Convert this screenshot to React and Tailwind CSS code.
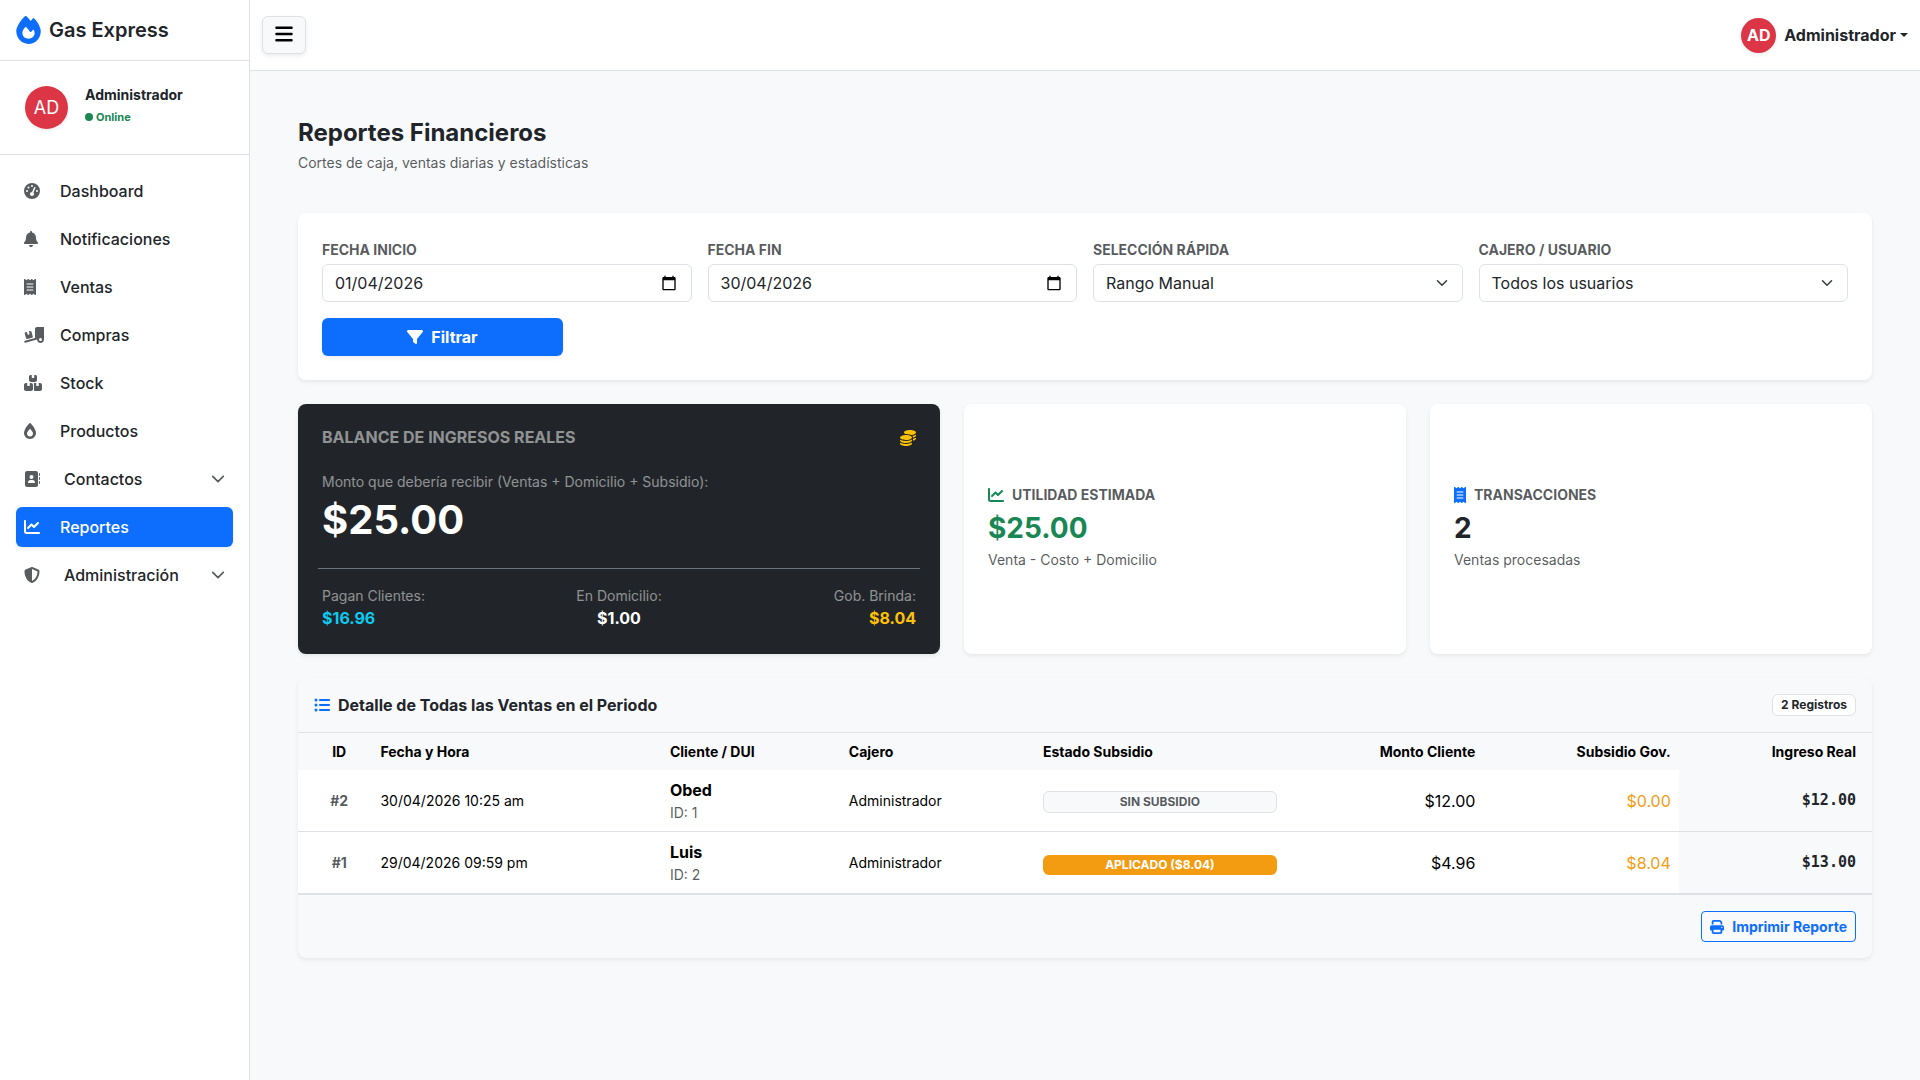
import React, { useState } from 'react'
import {
  FaAddressBook, FaBars, FaBell, FaBoxesStacked, FaChartLine, FaCoins, FaFilter, FaFire,
  FaFireFlameSimple, FaGaugeHigh, FaListUl, FaPrint, FaReceipt, FaShieldHalved, FaTruckRampBox
} from 'react-icons/fa6'

const navItems = [
  { label: 'Dashboard', icon: FaGaugeHigh, width: 'w-4' },
  { label: 'Notificaciones', icon: FaBell, width: 'w-[14px]' },
  { label: 'Ventas', icon: FaReceipt, width: 'w-3' },
  { label: 'Compras', icon: FaTruckRampBox, width: 'w-5' },
  { label: 'Stock', icon: FaBoxesStacked, width: 'w-[18px]' },
  { label: 'Productos', icon: FaFireFlameSimple, width: 'w-3' },
  { label: 'Contactos', icon: FaAddressBook, width: 'w-4', submenu: true },
  { label: 'Reportes', icon: FaChartLine, width: 'w-4', active: true },
  { label: 'Administración', icon: FaShieldHalved, width: 'w-4', submenu: true }
]

const ventas = [
  { id: 2, fecha: '30/04/2026 10:25 am', cliente: 'Obed', dui: 1, cajero: 'Administrador', aplicado: false, monto: '$12.00', subsidio: '$0.00', ingreso: '$12.00' },
  { id: 1, fecha: '29/04/2026 09:59 pm', cliente: 'Luis', dui: 2, cajero: 'Administrador', aplicado: true, monto: '$4.96', subsidio: '$8.04', ingreso: '$13.00' }
]

const Chevron = ({ className }) => (
  <svg viewBox="0 0 16 16" fill="none" stroke="currentColor" strokeWidth="2" strokeLinecap="round" strokeLinejoin="round" className={className} aria-hidden="true">
    <path d="m2 5 6 6 6-6" />
  </svg>
)

const CalendarIcon = ({ className }) => (
  <svg viewBox="0 0 24 24" fill="currentColor" className={className} aria-hidden="true">
    <path d="M20 3h-1V1h-2v2H7V1H5v2H4c-1.1 0-2 .9-2 2v16c0 1.1.9 2 2 2h16c1.1 0 2-.9 2-2V5c0-1.1-.9-2-2-2zm0 18H4V8h16v13z" />
  </svg>
)

const Sidebar = () => (
  <aside className="w-[250px] shrink-0 bg-white border-r border-[#dee2e6]">
    <a href="#" className="flex items-center gap-2 h-[61px] px-4 pb-px border-b border-[#dee2e6]">
      <FaFire className="h-7 w-[25px] text-[#0d6efd]" />
      <span className="text-xl font-semibold">Gas Express</span>
    </a>

    {/* Usuario */}
    <div className="flex items-center gap-[17px] p-[25px] border-b border-[#dee2e6]">
      <div className="w-[43px] h-[43px] rounded-full bg-[#dc3545] text-white text-lg leading-none flex items-center justify-center shadow-[0_2px_4px_rgba(0,0,0,0.075)]">
        AD
      </div>
      <div className="pb-1">
        <p className="text-sm font-bold leading-[18px] mb-[5px]">Administrador</p>
        <p className="flex items-center gap-[3px] text-[11px] font-bold leading-4 text-[#198754]">
          <span className="w-2 h-2 rounded-full bg-[#198754]" />
          Online
        </p>
      </div>
    </div>

    {/* Menú */}
    <nav className="flex flex-col gap-2 p-4">
      {navItems.map(({ label, icon: Icon, width, submenu, active }) => {
        const content = (
          <>
            <span className={`shrink-0 ${submenu ? 'w-10' : 'w-9'} ${active ? 'text-white' : 'text-[#212529bf]'}`}>
              <Icon className={`h-4 ${width}`} />
            </span>
            <span>{label}</span>
            {submenu && <Chevron className="w-[14px] h-[14px] ml-auto text-[#212529bf]" />}
          </>
        )
        if (submenu) {
          return (
            <button key={label} type="button" className="flex items-center h-10 px-2 rounded-md font-medium text-left cursor-pointer">
              {content}
            </button>
          )
        }
        return (
          <a key={label} href="#" className={`flex items-center h-10 px-2 rounded-md font-medium ${active ? 'bg-[#0d6efd] text-white shadow-[0_2px_4px_rgba(0,0,0,0.075)]' : ''}`}>
            {content}
          </a>
        )
      })}
    </nav>
  </aside>
)

const Topbar = () => (
  <header className="flex items-center justify-between h-[71px] px-3 bg-white border-b border-[#dee2e6]">
    <button type="button" aria-label="Menú" className="flex items-center justify-center w-11 h-[38px] pb-0.5 rounded-md bg-[#f8f9fa] border border-[#dee2e6] text-black shadow-[0_2px_4px_rgba(0,0,0,0.075)] cursor-pointer">
      <FaBars className="h-5 w-[18px]" />
    </button>
    <button type="button" className="flex items-center font-bold cursor-pointer">
      <span className="w-[35px] h-[35px] mr-2 rounded-full bg-[#dc3545] text-white flex items-center justify-center shadow-[0_2px_4px_rgba(0,0,0,0.075)]">
        AD
      </span>
      Administrador
      <span className="ml-1 border-x-4 border-t-4 border-x-transparent border-t-[#212529]" />
    </button>
  </header>
)

const labelClass = 'block pt-0.5 mb-1 text-sm font-bold leading-[21px] uppercase text-[#212529bf]'
const fieldClass = 'block w-full h-[38px] px-3 bg-white border border-[#dee2e6] rounded-md text-base'

const DateField = ({ id, label, value, onChange }) => (
  <div>
    <label htmlFor={id} className={labelClass}>{label}</label>
    <div className="relative">
      <input id={id} type="text" value={value} onChange={e => onChange(e.target.value)} className={fieldClass} />
      <CalendarIcon className="absolute right-[15px] top-[11px] w-4 h-4 text-black pointer-events-none" />
    </div>
  </div>
)

const SelectField = ({ id, label, options }) => (
  <div>
    <label htmlFor={id} className={labelClass}>{label}</label>
    <div className="relative">
      <select id={id} className={`${fieldClass} appearance-none`}>
        {options.map(option => <option key={option}>{option}</option>)}
      </select>
      <Chevron className="absolute right-[15px] top-[13px] w-3 h-3 pointer-events-none text-[#343a40]" />
    </div>
  </div>
)

const Filters = () => {
  const [inicio, setInicio] = useState('01/04/2026')
  const [fin, setFin] = useState('30/04/2026')

  return (
    <form onSubmit={e => e.preventDefault()} className="p-6 bg-white rounded-lg shadow-[0_2px_4px_rgba(0,0,0,0.075)]">
      <div className="grid grid-cols-4 gap-4">
        <DateField id="inicio" label="Fecha inicio" value={inicio} onChange={setInicio} />
        <DateField id="fin" label="Fecha fin" value={fin} onChange={setFin} />
        <SelectField id="rango" label="Selección rápida" options={['Rango Manual', 'Hoy', 'Esta semana', 'Este mes']} />
        <SelectField id="cajero" label="Cajero / usuario" options={['Todos los usuarios', 'Administrador']} />
      </div>
      <button type="submit" className="flex items-center justify-center gap-2 w-[241px] h-[38px] mt-4 rounded-md bg-[#0d6efd] text-white font-bold shadow-[0_2px_4px_rgba(0,0,0,0.075)] cursor-pointer">
        <FaFilter className="h-4 w-4" />
        Filtrar
      </button>
    </form>
  )
}

const BalanceCard = () => (
  <section className="p-6 rounded-lg bg-[#212529] text-white shadow-[0_2px_4px_rgba(0,0,0,0.075)]">
    <div className="flex items-center justify-between mb-6 leading-[19px]">
      <h2 className="font-bold text-white/50 uppercase">Balance de ingresos reales</h2>
      <FaCoins className="h-4 w-4 text-[#ffc107]" />
    </div>
    <p className="text-sm leading-[21px] text-white/50">Monto que debería recibir (Ventas + Domicilio + Subsidio):</p>
    <p className="text-[40px] font-bold leading-[48px] mt-1">$25.00</p>
    <div className="-mx-1 mt-6 px-1 pt-4 border-t border-[#6c757d] grid grid-cols-3">
      <div>
        <p className="text-sm leading-[21px] text-white/50">Pagan Clientes:</p>
        <p className="font-bold text-[#0dcaf0]">$16.96</p>
      </div>
      <div className="text-center">
        <p className="text-sm leading-[21px] text-white/50">En Domicilio:</p>
        <p className="font-bold">$1.00</p>
      </div>
      <div className="text-right">
        <p className="text-sm leading-[21px] text-white/50">Gob. Brinda:</p>
        <p className="font-bold text-[#ffc107]">$8.04</p>
      </div>
    </div>
  </section>
)

const StatCard = ({ icon, title, value, valueClass, note }) => (
  <section className="flex flex-col justify-center p-6 rounded-lg bg-white shadow-[0_2px_4px_rgba(0,0,0,0.075)]">
    <h2 className="flex items-center gap-2 text-sm font-bold leading-[21px] uppercase text-[#212529bf]">
      {icon}
      {title}
    </h2>
    <p className={`text-[28px] font-bold leading-[34px] mt-1.5 mb-1 ${valueClass}`}>{value}</p>
    <p className="pb-1 text-sm leading-[21px] text-[#212529bf]">{note}</p>
  </section>
)

const SalesTable = () => (
  <section className="rounded-lg bg-[#f8f9fa] shadow-[0_2px_4px_rgba(0,0,0,0.075)]">
    <div className="flex items-center justify-between h-[55px] px-4 border-b border-[#dee2e6]">
      <h2 className="flex items-center gap-2 font-bold">
        <FaListUl className="h-4 w-4 text-[#0d6efd]" />
        Detalle de Todas las Ventas en el Periodo
      </h2>
      <span className="px-2 py-1 rounded-md border border-[#dee2e6] bg-white text-xs font-bold leading-3">2 Registros</span>
    </div>

    <table className="w-full table-fixed text-black border-b-2 border-[#dee2e6] border-separate border-spacing-0">
      <colgroup>
        <col className="w-[4.73%]" />
        <col className="w-[18.39%]" />
        <col className="w-[11.37%]" />
        <col className="w-[12.33%]" />
        <col className="w-[15.88%]" />
        <col className="w-[12.61%]" />
        <col className="w-[12.42%]" />
        <col className="w-[12.27%]" />
      </colgroup>
      <thead>
        <tr className="text-sm leading-[21px] text-left *:p-2 *:font-bold">
          <th className="pl-4! text-center">ID</th>
          <th>Fecha y Hora</th>
          <th>Cliente / DUI</th>
          <th>Cajero</th>
          <th>Estado Subsidio</th>
          <th className="text-right">Monto Cliente</th>
          <th className="text-right">Subsidio Gov.</th>
          <th className="pr-4! text-right">Ingreso Real</th>
        </tr>
      </thead>
      <tbody>
        {ventas.map(v => (
          <tr key={v.id} className="bg-white *:p-2 *:border-[#dee2e6] not-last:*:border-b">
            <td className="pl-4! text-center text-sm font-bold text-[#212529bf]">#{v.id}</td>
            <td className="text-sm">{v.fecha}</td>
            <td>
              <div className="font-bold leading-6">{v.cliente}</div>
              <div className="text-sm leading-[21px] text-[#212529bf]">ID: {v.dui}</div>
            </td>
            <td className="text-sm">{v.cajero}</td>
            <td>
              {v.aplicado
                ? <span className="block mt-1 py-1 rounded-md bg-[#f39c12] text-white text-xs font-bold leading-3 text-center">APLICADO ({v.subsidio})</span>
                : <span className="block mt-0.5 py-1 rounded-md bg-[#f8f9fa] border border-[#dee2e6] text-[#212529bf] text-xs font-bold leading-3 text-center">SIN SUBSIDIO</span>}
            </td>
            <td className="text-right">{v.monto}</td>
            <td className="text-right text-[#f39c12]">{v.subsidio}</td>
            <td className="pr-4! text-right bg-[#f8f9fa] text-[#212529] font-bold text-[15px] font-['DejaVu_Sans_Mono',monospace]">{v.ingreso}</td>
          </tr>
        ))}
      </tbody>
    </table>

    <div className="flex justify-end p-4">
      <button type="button" className="flex items-center gap-2 h-[31px] px-2 rounded border border-[#0d6efd] text-[#0d6efd] text-sm font-bold cursor-pointer">
        <FaPrint className="h-[14px] w-[14px]" />
        Imprimir Reporte
      </button>
    </div>
  </section>
)

const App = () => (
  <div className="flex min-h-screen bg-[#f8f9fa] text-[#212529] text-base font-['Inter',sans-serif]">
    <Sidebar />
    <div className="flex-1 min-w-0">
      <Topbar />
      <main className="p-12">
        <h1 className="text-2xl font-bold leading-7 mb-[5px]">Reportes Financieros</h1>
        <p className="text-sm leading-[21px] mb-10 text-[#212529bf]">Cortes de caja, ventas diarias y estadísticas</p>

        <div className="flex flex-col gap-6">
          <Filters />
          <div className="grid grid-cols-[642fr_442fr_442fr] gap-6">
            <BalanceCard />
            <StatCard
              icon={<FaChartLine className="h-4 w-4 text-[#198754]" />}
              title="Utilidad estimada"
              value="$25.00"
              valueClass="text-[#198754]"
              note="Venta - Costo + Domicilio"
            />
            <StatCard
              icon={<FaReceipt className="h-4 w-3 text-[#0d6efd]" />}
              title="Transacciones"
              value="2"
              valueClass=""
              note="Ventas procesadas"
            />
          </div>
          <SalesTable />
        </div>
      </main>
    </div>
  </div>
)

export default App
